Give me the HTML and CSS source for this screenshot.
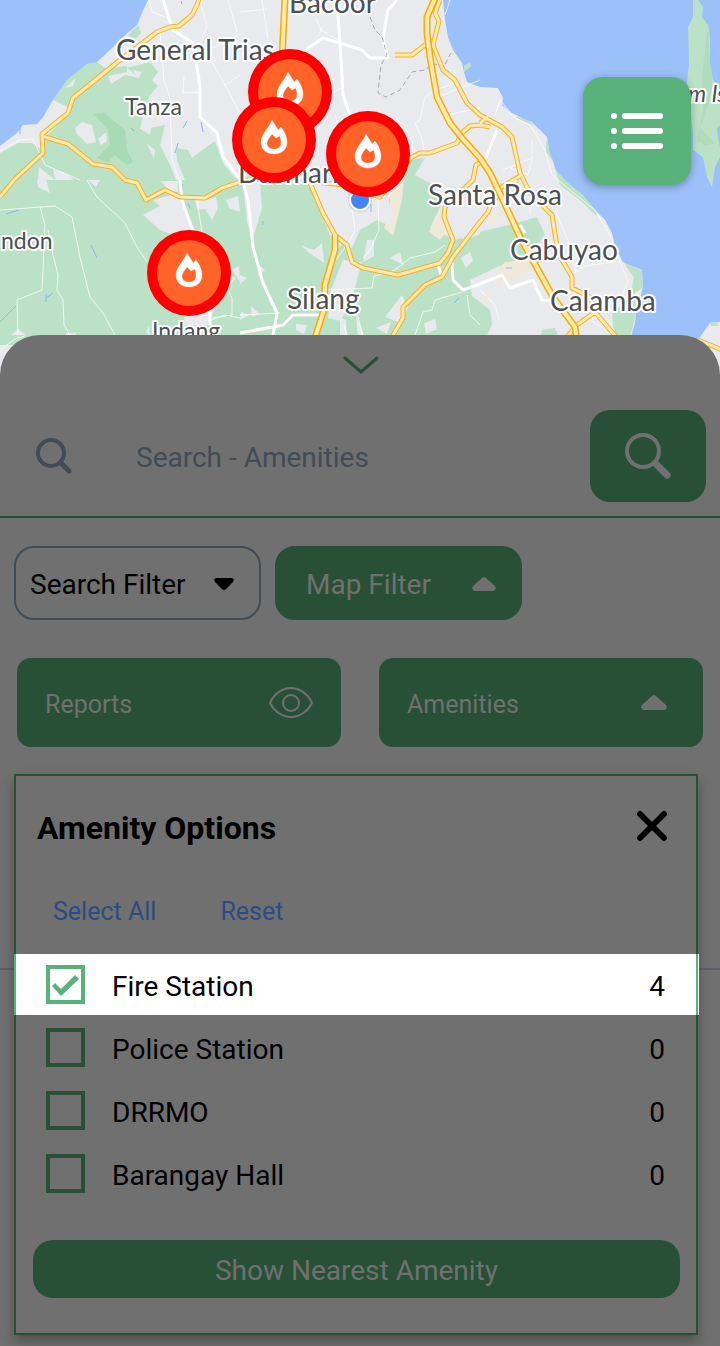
FILE: index.html
```html
<!DOCTYPE html>
<html lang="en">
<head>
<meta charset="utf-8">
<meta name="viewport" content="width=device-width, initial-scale=1">
<title>Amenity Map</title>
<link rel="stylesheet" href="styles.css">
</head>
<body>
<main class="app">
  <section class="map" aria-label="Map">
    <svg class="map-canvas" viewBox="0 0 720 376" preserveAspectRatio="xMidYMin slice" role="img" aria-label="Fire stations around Silang and Santa Rosa">
      <defs>
        <g id="pin">
          <ellipse rx="42" ry="43" fill="#ff0000"/>
          <ellipse rx="32" ry="33" fill="#ff6327"/>
          <path fill="#fff" fill-rule="evenodd" stroke="#fff" stroke-opacity=".3" d="M-2-20C0-16 3-13 4-10L7-13C11-8 13-2 13 2C13 10 7 14 0 14S-13 10-13 2C-13-6-6-10-2-20ZM-2-6C-4-3-7 0-7 3C-7 7-4 9 0 9S7 7 7 3Q7-1 6-4L2-2Z"/>
        </g>
      </defs>
      <rect width="720" height="376" fill="#e8eaed"/>
      <path class="green" d="M53 100L67 80L87 64L97 62L105 68L127 66L127 72L108 76L111 84L125 75L140 78L127 68L150 62L158 72L152 80L158 86L150 95L145 110L140 128L150 128L165 125L160 145L170 165L176 180L185 180L177 160L176 148L188 150L192 158L197 154L215 141L223 163L235 178L250 176L310 185L318 205L330 235L333 255L350 235L362 215L365 208L385 212L392 190L404 175L408 160L425 158L415 175L435 186L441 205L430 228L445 235L455 240L480 232L520 222L537 217L545 235L530 255L495 268L470 280L472 296L480 302L490 310L492 325L482 345L0 345V153L18 143L32 143L42 150L44 138L65 118L70 108Z"/>
      <path class="green" d="M128 35L138 25L141 33L134 41ZM498 88L506 85L507 91L502 95ZM515 117L526 118L535 126L527 123ZM546 141L551 142L552 160L546 152ZM554 165L566 180L583 195L580 200L560 185ZM623 261L642 271L643 287L635 293L636 310L634 323L629 340L614 334L612 314L630 296L634 278ZM542 330L555 328L560 340L540 340ZM565 183L583 195L598 211L596 216L580 200Z"/>
      <path fill="#a8dab5" d="M94 114L104 113L125 130L127 150L133 162L127 165L115 155L108 162L97 158L110 145L108 130Z"/>
      <path class="sand" d="M390 190L404 176L402 200L393 236L384 228L390 213ZM429 232L435 220L445 214L447 232L440 240ZM482 298L497 289L496 272L505 262L530 260L537 266L520 277L503 283L485 302ZM488 222L502 209L505 214L493 224Z"/>
      <path class="land" d="M75 128L82 122L92 125L96 142L87 144L77 134ZM98 139L106 132L107 141L101 145ZM133 70L142 72L138 79ZM65 88L76 78L73 86ZM146 143L155 150L154 158ZM139 128L152 125L150 135ZM53 170L66 173L74 180L55 180ZM39 167L55 180L38 180ZM143 215L160 206L153 200L178 193L182 198L194 228L200 232L192 242L160 230ZM37 180H46L50 193L38 187ZM88 180H100L96 187ZM195 200L216 197L218 208L212 220L205 209L197 210ZM161 181H178L178 192L168 190ZM226 200L238 196L240 212L229 208ZM232 270L239 266L240 282ZM243 182L260 180L262 208L253 238L247 222ZM259 265L265 270L258 277ZM301 245L314 250L322 243L324 263L308 252ZM240 275L247 278L240 284ZM310 183L322 180L380 185L388 200L394 213L390 226L377 220L360 230L352 248L330 235ZM367 240L374 240V256L363 262ZM343 260L362 262L353 295L341 321L328 318L331 290ZM390 258L400 252L403 265ZM385 317L402 295L408 308L398 322ZM340 318L346 320L347 340H340ZM356 315L364 336L358 340ZM296 324L307 325L304 334L296 330ZM251 306L260 314L252 317ZM241 312L249 315L240 320ZM376 328L391 322L387 334ZM424 323L435 319L437 329L426 334ZM461 258L470 252L473 260L466 268ZM463 205L480 200V234L466 240L455 235ZM183 307L205 300L216 304L208 325L185 325ZM230 275L236 278L231 284ZM11 335L18 329L26 335ZM66 333H76V340H66ZM146 332L149 326L150 337Z"/>
      <path class="water" d="M0 146L17 133L23 125L37 124L43 117L53 100L67 80L87 64L97 62L110 50L123 37L137 25L142 13L148 0H0ZM443 0L445 20L448 37L453 50L462 63L464 72L467 82L480 87L498 88L503 98L502 105L510 112L522 118L532 122L547 137L550 153L556 170L567 182L583 195L597 212L605 220L612 233L615 247L623 262L642 270L643 287L636 313L635 323L630 340H698L710 323L720 322V0Z"/>
      <path class="green" d="M464 66L470 62L471 66L464 72ZM710 322L717 322L718 326L711 326ZM693 0H698L703 7L702 17L708 25L710 37V63L713 80L720 88V125L717 128L718 138L720 147V157L715 167L712 187L707 177L703 157L693 150V133L687 83L689 63L688 27L693 17Z"/>
      <path fill="#afdcbc" d="M708 25L710 63L713 85L705 115L695 140L701 128L712 140L716 143L706 146L697 141L703 110L702 75Z"/>
      <path fill="none" stroke="#8ab4f8" d="M20 125V134M187 121L183 128M201 122L203 132M131 128L134 131M178 143L175 153M6 214L19 210M91 245L97 258M46 294V302M46 298L53 293M0 322L8 314L16 306M182 184V192M188 203L190 208M371 204V212M263 221V225M454 303L459 298M506 268H512M181 1L182 4"/>
      <path class="lane" d="M149 0L152 12L168 18M160 32L164 80L170 98L172 160L179 180M193 43L205 50L225 85L240 113M200 0L207 27L202 37M228 0L238 35L205 52M224 86L240 75M199 92L183 93L184 76M0 151L20 140L33 139L45 165L80 180M87 180L97 197L125 223L137 247L147 262M0 210L55 206L72 217L80 257L90 297L103 313L115 335M40 207L45 225L43 270L42 290L17 300L18 335M48 230L53 255L58 275L57 290L63 300L64 325L70 335M0 350L15 339L25 336M197 200L202 232M226 287L232 298L232 315L212 318M262 0L268 39M240 12L267 9M316 18L321 30L340 41M318 37L323 26M335 115L341 133M325 97L341 88M450 0L445 15M455 70L450 85L435 90L425 97L420 120L415 123L421 135L425 155M443 95L480 80M447 115L480 108M500 100L515 118L530 125L545 150L552 175L570 190L595 210L610 235L620 262L628 282L622 295M532 140V160L528 175L510 168M495 115L500 101M503 170L532 158M352 210L355 230L349 242L325 275M378 200L379 230L370 250L363 258M327 290L372 288L374 276L395 270L410 258L435 252L445 245M415 335L423 312L432 310L435 300L462 292M467 295L470 315L480 325M240 315L280 313M344 325L347 336M357 313L363 336M555 210L570 245L576 272M530 196V215M572 274L585 266L615 262M480 290L495 305L499 320M590 320L600 326M212 320L225 315L240 318"/>
      <path class="street" d="M163 0L173 30L193 43L197 67L200 87L200 117L217 133L223 157L233 170L243 183L248 200L253 247L263 283L277 313L273 335M180 180L182 200L193 232M295 62L308 48L323 38L340 43L362 50L370 58H388L383 40L385 27L388 10L397 0M337 0L340 43L343 95L350 115M240 333L283 325L293 315L320 315M210 310V325M452 263L453 280L463 290L480 284L502 275L510 288L533 280L542 300L556 301M497 130L491 145L485 160M438 264L441 275M520 225L525 233"/>
      <path class="border" d="M370 17L375 30L382 37L387 55L381 65L378 93L386 97L400 90L412 72L425 70L433 63L443 68L451 53"/>
      <g class="road-case">
        <path id="roads" d="M200-5L197 5L192 15L179 26L170 27L157 32L140 45L120 60L73 98L68 113L42 134L43 153L15 179L0 197M42 136L68 144L93 164L112 167L125 180L137 183L146 200L165 190L180 197L205 198L222 188L240 182L300 172L315 182L345 185L380 197L412 157L420 153L430 153L457 143L462 133L470 126L480 125L490 127M310 183L323 213L335 235L347 245L352 262L363 268L398 275L440 263L448 253L453 240L444 217L445 207L473 180L476 165L485 160M395 55H412L425 45M440 0L435 13L439 21L433 45L443 70L455 80L467 103L480 115L502 127L512 137L520 173L530 193L552 215L558 253L572 277V288L590 297L595 312L617 338M595 312L577 325L566 338M500 188L522 175M480 222L488 212L493 200L517 180M480 222L453 257L442 277L425 285L403 307V318L392 337M698 340L722 350M480 123L488 117"/>
      </g>
      <use href="#roads" class="road-fill"/>
      <path class="major-case" d="M285-2L282 60M335 235V250L325 285L324 310L315 338M436-4L427 17L427 33L430 57L437 97L450 123L462 138L480 158L490 173L503 200L520 237L553 297L575 327L577 340"/>
      <path class="major-fill" d="M285-2L282 60M335 235V250L325 285L324 310L315 338M436-4L427 17L427 33L430 57L437 97L450 123L462 138L480 158L490 173L503 200L520 237L553 297L575 327L577 340"/>
      <g class="town">
        <text x="289" y="13">Bacoor</text>
        <text x="116" y="60">General Trias</text>
        <text x="238" y="183">Dasmariñas</text>
        <text x="428" y="205">Santa Rosa</text>
        <text x="510" y="260">Cabuyao</text>
        <text x="550" y="311">Calamba</text>
        <text x="287" y="309">Silang</text>
      </g>
      <g class="village">
        <text x="125" y="115">Tanza</text>
        <text x="1" y="249">ndon</text>
        <text x="152" y="339">Indang</text>
        <text x="688" y="102" font-style="italic">m Island</text>
      </g>
      <circle cx="360" cy="200" r="12" fill="#000" opacity=".12"/>
      <circle cx="360" cy="200" r="10" fill="#4285f4" stroke="#fff" stroke-width="2"/>
      <use href="#pin" x="290" y="92"/>
      <use href="#pin" x="274" y="140"/>
      <use href="#pin" x="368" y="154"/>
      <use href="#pin" x="189" y="273"/>
    </svg>
    <button class="menu-button" type="button" aria-label="Menu">
      <svg width="54" height="40" viewBox="0 0 54 40" fill="none" stroke="#fff" stroke-width="6" stroke-linecap="round"><path d="M15 5H50M15 20H50M15 35H50M4 5H4M4 20H4M4 35H4"/></svg>
    </button>
  </section>

  <section class="sheet">
    <button class="handle" type="button" aria-label="Collapse panel">
      <svg width="38" height="20" viewBox="0 0 38 20" fill="none" stroke="#285036" stroke-width="3" stroke-linecap="round"><path d="M4 3L20 17L36 3"/></svg>
    </button>

    <form class="search" role="search">
      <svg class="search-glyph" width="36" height="37" viewBox="0 0 36 37" fill="none" stroke="#434b57" stroke-linecap="round"><circle cx="15" cy="15" r="13" stroke-width="4"/><path d="M25 25L33 33" stroke-width="5"/></svg>
      <input class="search-field" type="search" placeholder="Search - Amenities" aria-label="Search amenities">
      <button class="search-button" type="submit" aria-label="Search">
        <svg width="48" height="48" viewBox="0 0 48 48" fill="none" stroke="#707070" stroke-linecap="round"><circle cx="19" cy="19" r="16" stroke-width="4"/><path d="M32 32L43 43" stroke-width="7"/></svg>
      </button>
    </form>

    <div class="filters">
      <button class="filter" type="button" aria-expanded="false">Search Filter
        <svg width="20" height="13" viewBox="0 0 20 13"><path fill="#000" d="M2 0H18Q21 1 19 4L12 11Q10 13 8 11L1 4Q-1 1 2 0Z"/></svg>
      </button>
      <button class="filter filter-active" type="button" aria-expanded="true">Map Filter
        <svg width="24" height="15" viewBox="0 0 24 15"><path fill="#707070" d="M2 14H22Q25 12 23 9L14 1Q12-1 10 1L1 9Q-1 12 2 14Z"/></svg>
      </button>
    </div>

    <div class="categories">
      <button class="category" type="button"><span class="category-name">Reports</span>
        <svg width="44" height="31" viewBox="0 0 44 31" fill="none" stroke="#707070" stroke-width="2"><path d="M1 16C5 7 13 1 22 1S39 7 43 16C39 24 31 30 22 30S5 24 1 16Z"/><circle cx="22" cy="16" r="8"/></svg>
      </button>
      <button class="category" type="button" aria-expanded="true"><span class="category-name">Amenities</span>
        <svg width="26" height="16" viewBox="0 0 26 16"><path fill="#707070" d="M2 15H24Q27 13 25 10L15 1Q13-1 11 1L1 10Q-1 13 2 15Z"/></svg>
      </button>
    </div>

    <div class="panel-area">
      <section class="panel" aria-labelledby="panel-title">
        <header class="panel-header">
          <h1 class="panel-title" id="panel-title">Amenity Options</h1>
          <button class="close" type="button" aria-label="Close">
            <svg width="32" height="32" viewBox="0 0 32 32" fill="none" stroke="#000" stroke-width="6" stroke-linecap="round"><path d="M4 4L28 28M28 4L4 28"/></svg>
          </button>
        </header>
        <div class="bulk">
          <a class="bulk-link" href="#all">Select All</a>
          <a class="bulk-link" href="#reset">Reset</a>
        </div>
        <ul class="options">
          <li class="option option-lit"><input class="check" type="checkbox" id="fire" checked><label class="option-label" for="fire">Fire Station</label><span>4</span></li>
          <li class="option"><input class="check" type="checkbox" id="police"><label class="option-label" for="police">Police Station</label><span>0</span></li>
          <li class="option"><input class="check" type="checkbox" id="drrmo"><label class="option-label" for="drrmo">DRRMO</label><span>0</span></li>
          <li class="option"><input class="check" type="checkbox" id="hall"><label class="option-label" for="hall">Barangay Hall</label><span>0</span></li>
        </ul>
        <button class="nearest" type="button">Show Nearest Amenity</button>
      </section>
    </div>
  </section>
</main>
</body>
</html>
```
FILE: styles.css
```css
:root {
  --surface: #707070;
  --green: #285036;
  --green-lit: #5ab27b;
  --slate: #434b57;
}

* {
  box-sizing: border-box;
}

body {
  margin: 0;
  background: var(--surface);
  color: #000;
  font-family: Roboto, "Liberation Sans", sans-serif;
  font-size: 28px;
}

button {
  padding: 0;
  border: 0;
  background: none;
  color: inherit;
  font: inherit;
  cursor: pointer;
}

svg {
  display: block;
  flex: none;
}

.map {
  position: relative;
}

.map-canvas {
  width: 100%;
  height: 376px;
}

.green {
  fill: #bbe2c6;
}

.land {
  fill: #e8eaed;
}

.sand {
  fill: #f0e9da;
}

.water {
  fill: #9cc0f9;
}

.lane,
.street,
.border,
.road-case,
.road-fill,
.major-case,
.major-fill {
  fill: none;
  stroke-linejoin: round;
}

.lane {
  stroke: #fff;
  stroke-opacity: 0.75;
  stroke-width: 1;
}

.street {
  stroke: #fff;
  stroke-width: 3;
}

.border {
  stroke: #a5a8ad;
  stroke-width: 1;
  stroke-dasharray: 5 3;
}

.road-case {
  stroke: #f5b122;
  stroke-width: 5;
}

.road-fill {
  stroke: #ffe9ae;
  stroke-width: 3;
}

.major-case {
  stroke: #f9ab00;
  stroke-width: 7;
}

.major-fill {
  stroke: #ffe9ae;
  stroke-width: 4;
}

.town,
.village {
  fill: #4c4f53;
  stroke: #fff;
  stroke-width: 4px;
  stroke-linejoin: round;
  paint-order: stroke;
  font-family: Lato, sans-serif;
  font-size: 28px;
}

.village {
  font-size: 23px;
}

.menu-button {
  position: absolute;
  top: 77px;
  right: 29px;
  display: grid;
  place-items: center;
  width: 108px;
  height: 108px;
  border-radius: 20px;
  background: var(--green-lit);
  box-shadow: 0 2px 8px rgba(0, 0, 0, 0.3);
}

.sheet {
  position: relative;
  margin-top: -41px;
  padding-bottom: 11px;
  border-radius: 40px 40px 0 0;
  background: var(--surface);
}

.handle {
  display: grid;
  place-items: center;
  width: 100%;
  height: 59px;
  margin-bottom: 16px;
}

.search {
  display: flex;
  align-items: center;
  padding: 0 14px 14px 36px;
  border-bottom: 2px solid var(--green);
}

.search-field {
  flex: 1;
  min-width: 0;
  margin: 0 16px 0 64px;
  padding: 3px 0 0;
  border: 0;
  outline: 0;
  background: none;
  color: var(--slate);
  font: inherit;
  line-height: 40px;
  appearance: none;
}

.search-field::placeholder {
  color: var(--slate);
  opacity: 1;
}

.search-button {
  display: grid;
  place-items: center;
  width: 116px;
  height: 92px;
  border-radius: 20px;
  background: var(--green);
}

.filters {
  display: flex;
  gap: 14px;
  padding: 28px 14px 38px;
}

.filter {
  display: flex;
  align-items: center;
  justify-content: space-between;
  width: 247px;
  height: 74px;
  padding: 2px 25px 0 14px;
  border: 2px solid var(--slate);
  border-radius: 20px;
}

.filter-active {
  padding: 2px 24px 0 29px;
  border-color: var(--green);
  background: var(--green);
  color: var(--surface);
}

.categories {
  display: grid;
  grid-template-columns: 1fr 1fr;
  gap: 38px;
  padding: 0 17px;
}

.category {
  display: flex;
  align-items: center;
  justify-content: space-between;
  height: 89px;
  padding: 0 28px;
  border-radius: 14px;
  background: var(--green);
  color: var(--surface);
  font-size: 25px;
}

.category + .category {
  padding-right: 36px;
}

.category-name {
  padding-top: 4px;
}

.panel-area {
  position: relative;
  padding: 27px 22px 0 14px;
}

.panel-area::before {
  content: "";
  position: absolute;
  top: 221px;
  left: 0;
  right: 0;
  height: 2px;
  background: #5b6067;
}

.panel {
  position: relative;
  padding-bottom: 35px;
  border: 2px solid var(--green);
  background: var(--surface);
  box-shadow: 0 6px 12px rgba(0, 0, 0, 0.3);
}

.panel-header {
  display: flex;
  align-items: center;
  justify-content: space-between;
  padding: 32px 28px 0 21px;
}

.panel-title {
  margin: 0;
  font-size: 32px;
  font-weight: 700;
  line-height: 40px;
}

.close {
  padding-bottom: 4px;
}

.bulk {
  display: flex;
  gap: 64px;
  padding: 44px 37px 22px;
  font-size: 25px;
  line-height: 40px;
}

.bulk-link {
  color: #2b4d7f;
  text-decoration: none;
}

.options {
  display: grid;
  gap: 2px;
  margin: 0 -2px;
  padding: 0;
  list-style: none;
}

.option {
  display: flex;
  align-items: center;
  gap: 27px;
  height: 61px;
  padding: 0 33px 0 32px;
}

.option-label {
  flex: 1;
  padding-top: 3px;
}

.option span {
  padding-top: 3px;
}

.option-lit {
  padding: 0 31px 0 30px;
  border: solid var(--green-lit);
  border-width: 0 2px;
  background: #fff;
  box-shadow: 1px 0 #fff;
}

.check {
  width: 39px;
  height: 39px;
  margin: 0;
  border: 4px solid var(--green);
  appearance: none;
}

.check:checked {
  border-color: var(--green-lit);
}

.check:checked::before {
  content: "";
  display: block;
  width: 31px;
  height: 31px;
  background: var(--green-lit);
  clip-path: polygon(2px 17px, 5px 14px, 11px 20px, 25px 6px, 29px 10px, 11px 27px);
}

.nearest {
  display: block;
  width: calc(100% - 33px);
  height: 58px;
  margin: 36px 16px 0 17px;
  padding-top: 2px;
  border-radius: 20px;
  background: var(--green);
  color: var(--surface);
}
```
